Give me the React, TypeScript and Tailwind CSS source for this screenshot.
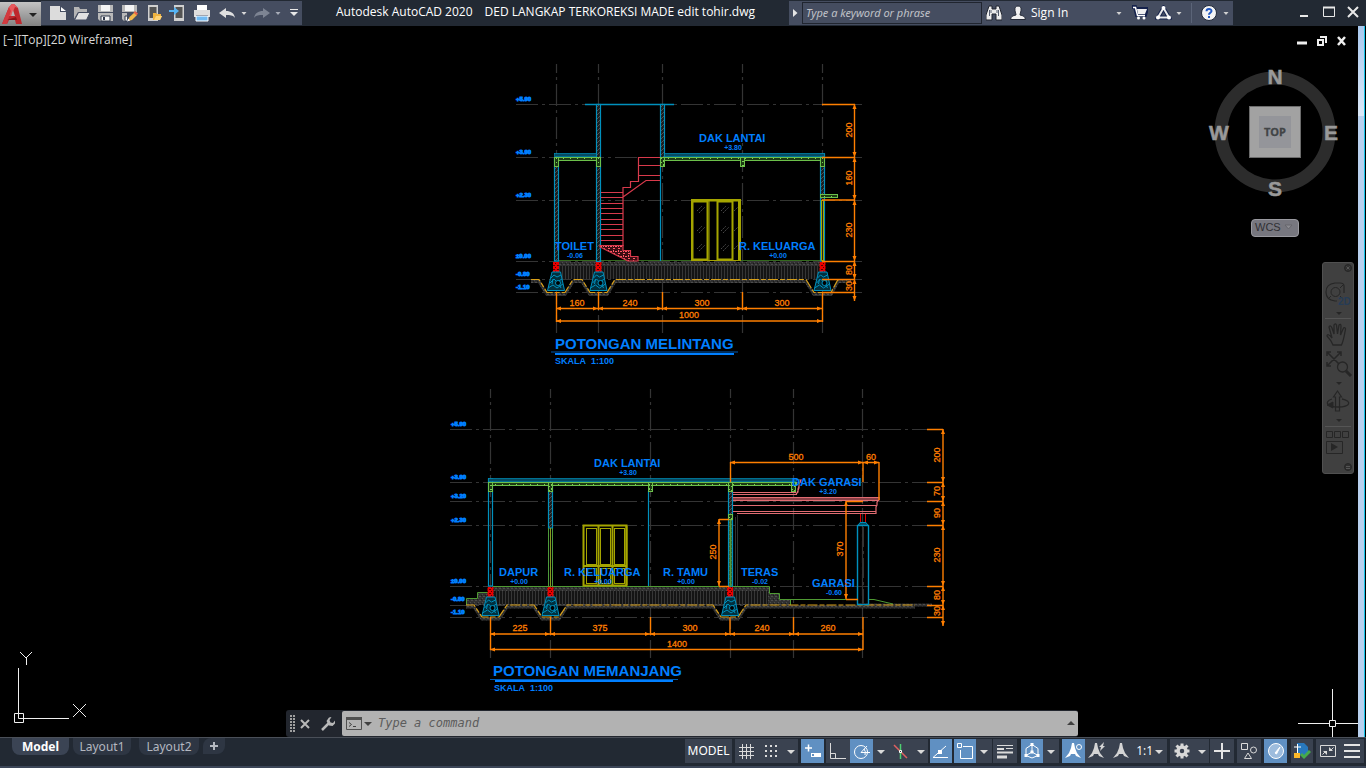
import React from "react";

type Pt = [number, number];

const ORANGE = "#ff7f00";
const BLUE = "#007fff";
const CYAN = "#0090bd";
const GREEN = "#6cc04a";
const YELLOW = "#a5a500";
const PINK = "#e06c72";

/* ---------- drawing helpers ---------- */

const Label = ({ x, y, children }: { x: number; y: number; children: string }) => (
  <text x={x} y={y} fontSize="11" fontWeight="700" fill={BLUE}>{children}</text>
);

const Level = ({ x, y, children }: { x: number; y: number; children: string }) => (
  <text x={x} y={y} fontSize="7" fontWeight="700" fill={BLUE} textAnchor="middle">{children}</text>
);

const Mark = ({ x, y, children }: { x: number; y: number; children: string }) => (
  <text x={x} y={y} fontSize="6" fontWeight="700" fill={BLUE} stroke={BLUE} strokeWidth="0.9" fontFamily="Liberation Sans Narrow, Liberation Sans, sans-serif">{children}</text>
);

const DimText = ({ x, y, v, up }: { x: number; y: number; v: string; up?: boolean }) => (
  <text x={x} y={y} fontSize="9" fill={ORANGE} stroke={ORANGE} strokeWidth="0.3" textAnchor="middle" transform={up ? `rotate(-90 ${x} ${y})` : undefined}>{v}</text>
);

const HDim = ({ y, xs }: { y: number; xs: number[] }) => (
  <g fill={ORANGE}>
    <path d={`M${xs[0]} ${y}H${xs[xs.length - 1]}`} stroke={ORANGE} strokeWidth="1.4" />
    {xs.map((x, i) => (
      <path key={x} d={`${i > 0 ? `M${x} ${y}l-5 -2v4z` : ""}${i < xs.length - 1 ? `M${x} ${y}l5 -2v4z` : ""}`} />
    ))}
  </g>
);

const VDim = ({ x, ys }: { x: number; ys: number[] }) => (
  <g fill={ORANGE}>
    <path d={`M${x} ${ys[0]}V${ys[ys.length - 1]}`} stroke={ORANGE} strokeWidth="1.4" />
    {ys.map((y, i) => (
      <path key={y} d={`${i > 0 ? `M${x} ${y}l-2 -5h4z` : ""}${i < ys.length - 1 ? `M${x} ${y}l-2 5h4z` : ""}`} />
    ))}
  </g>
);

const Axes = ({ xs, y1, y2, ys, x1, x2 }: { xs: number[]; y1: number; y2: number; ys: number[]; x1: number; x2: number }) => (
  <g stroke="#343434" strokeWidth="1.2" strokeDasharray="22 4 3 4">
    {xs.map((x) => <path key={`v${x}`} d={`M${x} ${y1}V${y2}`} strokeDashoffset="13" />)}
    {ys.map((y) => <path key={`h${y}`} d={`M${x1} ${y}H${x2}`} />)}
  </g>
);

const Wall = ({ x, y, h, hatch = true }: { x: number; y: number; h: number; hatch?: boolean }) => (
  <rect x={x} y={y} width="4" height={h} fill={hatch ? "url(#wall)" : "none"} stroke={CYAN} strokeWidth="1.2" />
);

const Footing = ({ x, y }: { x: number; y: number }) => (
  <g>
    <rect x={x - 3} y={y} width="6" height="10" fill="url(#brick)" />
    <path d={`M${x - 4} ${y + 10}h8.500l4 18.500h-17z`} fill="#02303e" stroke={CYAN} />
    <path d={`M${x - 5} ${y + 16}l3 -3l3 2l4 -2M${x - 6} ${y + 21}l4 -4l3 3l5 -3M${x - 8} ${y + 26}l5 -3l4 3l6 -4M${x - 3} ${y + 17}l-1 5M${x + 2} ${y + 20}l3 6`} stroke={CYAN} fill="none" />
    <circle cx={x + 2} cy={y + 21} r="2.500" fill="#000" stroke={CYAN} />
  </g>
);

const poly = (pts: Pt[]) => "M" + pts.map((p) => p.join(" ")).join("L");

const Ground = ({ pts }: { pts: Pt[] }) => (
  <g fill="none">
    <path d={poly(pts)} transform="translate(0 2)" stroke="url(#soil)" strokeWidth="3" />
    <path d={poly(pts)} stroke="#d9a018" strokeWidth="1.2" strokeDasharray="10 2 5 2" />
  </g>
);

const Beams = ({ xs, y }: { xs: number[]; y: number }) => (
  <g fill="url(#conc)" stroke={GREEN}>
    {xs.map((x) => <rect key={x} x={x - 2} y={y} width="4" height="9" />)}
  </g>
);

const CrossSection = () => (
  <g>
    <Axes xs={[556.5, 598.5, 662.5, 742.5, 822.5]} y1={64} y2={333} ys={[104.5, 157.5, 200.5, 261.5, 279.5, 292.5]} x1={516} x2={862} />
    <rect x="558" y="266" width="263" height="13" fill="url(#fill)" />
    <rect x="558" y="262" width="263" height="4" fill="url(#soil)" />
    <path d="M558 260.500H821" stroke="#35691f" />
    <Ground pts={[[531, 279.5], [539, 279.5], [547, 292.5], [565, 292.5], [573, 279.5], [582, 279.5], [590, 292.5], [607, 292.5], [615, 279.5], [806, 279.5], [814, 292.5], [831, 292.5], [838, 279.5], [851, 279.5]]} />
    {[556, 598.5, 822.5].map((x) => <Footing key={x} x={x} y={262} />)}

    <path d="M585 104.500H674" stroke={CYAN} strokeWidth="1.4" />
    <Wall x={554.5} y={158} h={103} />
    <Wall x={596.5} y={104.5} h={157} />
    <Wall x={660.5} y={104.5} h={53} />
    <path d="M660.500 158V261" stroke={CYAN} strokeWidth="1.2" />
    <Wall x={820.5} y={154} h={107} />
    <g fill="#054c63" stroke={CYAN} strokeWidth="0.700">
      <rect x="554.500" y="153.500" width="42" height="3" />
      <rect x="664.500" y="153.500" width="160" height="3" />
    </g>
    <g fill="url(#conc)" stroke={GREEN}>
      <rect x="554.500" y="157.500" width="46" height="3" />
      <rect x="660.500" y="157.500" width="164" height="3" />
      <rect x="820.500" y="194.500" width="17" height="3" />
    </g>
    <Beams xs={[556.5, 598.5, 662.5, 742.5, 822.5]} y={157.5} />
    <rect x="821.500" y="200.500" width="2" height="60" fill="#222" stroke={YELLOW} />

    <g fill="none" stroke="#d83a4c" strokeWidth="1.2">
      <path d="M623 246V187.500H630.500V181.500H638.500V157.500H660M638 165.500H660M638 175.500H660M623 197L646 180.500H660" />
      <path d="M601 192.500H623M601 197.500H623M601 203.500H623M601 208.500H623M601 213.500H623M601 219.500H623M601 224.500H623M601 229.500H623M601 235.500H623M601 240.500H623" />
      <path d="M600 245.500H623V250.500H630.500V256.500H638V261H628L600 247z" fill="url(#stair)" />
    </g>

    <g fill="none" stroke={YELLOW}>
      <rect x="691.500" y="199.500" width="49" height="61" />
      <rect x="692.500" y="201.500" width="15" height="58" strokeWidth="2" />
      <path d="M709 200V260" />
      <rect x="717.500" y="201.500" width="15" height="58" strokeWidth="2" />
      <path d="M739 201V260M692 200.500H740" strokeWidth="2" />
    </g>
    <path d="M697 211l5 -5M699 213l6 -6M697 231l5 -5M699 233l6 -6M697 249l5 -5M699 251l6 -6M721 211l5 -5M723 213l6 -6M721 231l5 -5M723 233l6 -6M721 249l5 -5M723 251l6 -6M734 211l4 -4M734 231l4 -4M734 249l4 -4" stroke="#484848" strokeDasharray="2 1" />

    <g stroke={ORANGE} strokeWidth="1.4">
      <path d="M822 104.500H855M822 157.500H855M822 200H855M822 261.500H855M822 279.500H855M822 292.500H855" />
      <path d="M556.500 292V322M598.500 292V310M662.500 292V310M742.500 292V310M822.500 292V322" />
    </g>
    <VDim x={854.5} ys={[104, 157, 200, 261, 279, 301]} />
    <HDim y={308.5} xs={[556, 598, 662, 742, 822]} />
    <HDim y={321} xs={[556, 822]} />
    <DimText x={852} y={130} v="200" up />
    <DimText x={852} y={178} v="160" up />
    <DimText x={852} y={230} v="230" up />
    <DimText x={852} y={270} v="80" up />
    <DimText x={852} y={286} v="30" up />
    <DimText x={577} y={306} v="160" />
    <DimText x={630} y={306} v="240" />
    <DimText x={702} y={306} v="300" />
    <DimText x={782} y={306} v="300" />
    <DimText x={689} y={318} v="1000" />

    <Mark x={516} y={101}>+5.90</Mark>
    <Mark x={516} y={154}>+3.90</Mark>
    <Mark x={516} y={197}>+2.30</Mark>
    <Mark x={516} y={258}>±0.00</Mark>
    <Mark x={516} y={276}>-0.80</Mark>
    <Mark x={516} y={289}>-1.10</Mark>

    <Label x={699} y={142}>DAK LANTAI</Label>
    <Level x={733} y={150}>+3.80</Level>
    <Label x={555} y={250}>TOILET</Label>
    <Level x={575} y={258}>-0.06</Level>
    <Label x={739} y={250}>R. KELUARGA</Label>
    <Level x={778} y={258}>+0.00</Level>

    <text x="555" y="349" fontSize="15" fontWeight="700" fill={BLUE}>POTONGAN MELINTANG</text>
    <path d="M551 352H738" stroke="#0058b0" />
    <path d="M555 354H734" stroke={BLUE} strokeWidth="2" />
    <text x="555" y="364" fontSize="9" fontWeight="700" fill={BLUE}>SKALA&#160; 1:100</text>
  </g>
);

const LongSection = () => (
  <g>
    <Axes xs={[490.5, 550.5, 650.5, 730.5, 793.5, 862.5]} y1={389} y2={658} ys={[429.5, 482.5, 501.5, 525.5, 586.5, 605.5, 617.5]} x1={450} x2={940} />
    <path d="M467 605V599H478V593H492V587H769V594H779V600H791V605z" fill="url(#soil)" />
    <rect x="494" y="591" width="274" height="13" fill="url(#fill)" />
    <path d="M857 605H932" stroke="url(#soil)" strokeWidth="3" />
    <g fill="none" stroke="#4f9a33">
      <path d="M466.500 605V598.500H477.500V592.500H488.500M493 586.500H769.500V593.500H779.500V599.500H857M790.500 600V605" />
      <path d="M869 599.500H874L893 604" />
    </g>
    <Ground pts={[[466, 605], [474, 605], [482, 617], [499, 617], [507, 605], [534, 605], [542, 617], [559, 617], [567, 605], [713, 605], [721, 617], [738, 617], [746, 605], [915, 605]]} />
    {[490.5, 550.5, 730].map((x) => <Footing key={x} x={x} y={587} />)}

    <Wall x={488.5} y={479} h={107} hatch={false} />
    <Wall x={548.5} y={485} h={43} />
    <path d="M548.500 528V586M552.500 528V586" stroke="#4d9a3a" />
    <path d="M550.500 528V586" stroke="#8a9a20" />
    <path d="M648.500 491V586" stroke={CYAN} strokeWidth="1.2" />
    <Wall x={728.5} y={485} h={101} />
    <path d="M730.500 520V586" stroke="#4d9a3a" strokeWidth="2" />
    <path d="M735.500 517V586M737.500 515V586" stroke="#303030" />
    <rect x="488.500" y="478.500" width="308" height="3" fill="#054c63" stroke={CYAN} strokeWidth="0.700" />
    <rect x="488.500" y="482.500" width="308" height="3" fill="url(#conc)" stroke={GREEN} />
    <Beams xs={[490.5, 550.5, 650.5, 730.5, 793.5]} y={482.5} />
    <rect x="728.500" y="514.500" width="4" height="5" fill="url(#conc)" stroke={GREEN} />

    <g fill="none" stroke={YELLOW}>
      <rect x="583.500" y="525.500" width="43" height="60" strokeWidth="2" />
      {[586.5, 600.5, 614.5].map((x) => (
        <g key={x}>
          <rect x={x} y="528.500" width="10" height="36" />
          <path d={`M${x + 12} 526V585`} strokeWidth="2" />
          <rect x={x} y="568.500" width="10" height="15" />
        </g>
      ))}
      <path d="M583 566H627" strokeWidth="2" />
    </g>

    <g fill="none" stroke={PINK} strokeWidth="1.2">
      <path d="M733 492.500H796M733 494.500H797M796 494l2 -2v-3l1 -3v-3l2 -3h-3M797 493l2 -5v-4l2 -3" />
      <path d="M733 497.500H879V500l-2 2v3l-1 2v6M733 500.500H878M733 505.500H877M733 511.500H876M737 513.500H876V507" />
      <path d="M733 499H878" strokeWidth="2" stroke="#8a3f45" />
    </g>
    <path d="M860.500 514V523M865.500 514V523" stroke="#e00000" />
    <path d="M858 525.500l2 -3H866l2 3z" fill="#054c63" stroke={CYAN} />
    <rect x="857.500" y="525.500" width="11" height="79" fill="none" stroke={CYAN} strokeWidth="1.4" />
    <path d="M863 527V604" stroke="#333" strokeWidth="2" strokeDasharray="20 4 3 4" />

    <g stroke={ORANGE} strokeWidth="1.4">
      <path d="M927 429.500H943M927 482.500H943M927 501.500H943M927 525.500H943M927 586.500H943M927 605.500H943M927 617.500H943" />
      <path d="M490.500 617V650M550.500 617V635M650.500 617V635M730 617V635M793.500 617V635M863 617V650" />
      <path d="M730.500 462V482M863 462V482M879 462V500M719 519.500H729M719 586.500H729M846 501.500H863M846 599.500H858" />
    </g>
    <VDim x={943} ys={[429, 482, 501, 525, 586, 605, 626]} />
    <VDim x={719} ys={[519, 586]} />
    <VDim x={846} ys={[501, 599]} />
    <HDim y={634} xs={[490, 550, 650, 730, 794, 863]} />
    <HDim y={649.5} xs={[490, 863]} />
    <HDim y={462.5} xs={[730, 863, 879]} />
    <DimText x={940} y={455} v="200" up />
    <DimText x={940} y={491} v="70" up />
    <DimText x={940} y={513} v="90" up />
    <DimText x={940} y={555} v="230" up />
    <DimText x={940} y={595} v="80" up />
    <DimText x={940} y={611} v="30" up />
    <DimText x={716} y={552} v="250" up />
    <DimText x={843} y={549} v="370" up />
    <DimText x={796} y={460} v="500" />
    <DimText x={871} y={460} v="60" />
    <DimText x={520} y={631} v="225" />
    <DimText x={600} y={631} v="375" />
    <DimText x={690} y={631} v="300" />
    <DimText x={762} y={631} v="240" />
    <DimText x={828} y={631} v="260" />
    <DimText x={677} y={647} v="1400" />

    <Mark x={451} y={426}>+5.90</Mark>
    <Mark x={451} y={479}>+3.90</Mark>
    <Mark x={451} y={498}>+3.20</Mark>
    <Mark x={451} y={522}>+2.30</Mark>
    <Mark x={451} y={583}>±0.00</Mark>
    <Mark x={451} y={601}>-0.80</Mark>
    <Mark x={451} y={614}>-1.10</Mark>

    <Label x={594} y={467}>DAK LANTAI</Label>
    <Level x={628} y={475}>+3.80</Level>
    <Label x={792} y={486}>DAK GARASI</Label>
    <Level x={828} y={494}>+3.20</Level>
    <Label x={499} y={576}>DAPUR</Label>
    <Level x={519} y={584}>+0.00</Level>
    <Label x={564} y={576}>R. KELUARGA</Label>
    <Level x={603} y={584}>+0.00</Level>
    <Label x={663} y={576}>R. TAMU</Label>
    <Level x={686} y={584}>+0.00</Level>
    <Label x={741} y={576}>TERAS</Label>
    <Level x={760} y={584}>-0.02</Level>
    <Label x={812} y={587}>GARASI</Label>
    <Level x={834} y={595}>-0.60</Level>

    <text x="493" y="676" fontSize="15" fontWeight="700" fill={BLUE}>POTONGAN MEMANJANG</text>
    <path d="M490 679.500H678" stroke="#0058b0" />
    <path d="M495 681H673" stroke={BLUE} strokeWidth="2" />
    <text x="494" y="691" fontSize="9" fontWeight="700" fill={BLUE}>SKALA&#160; 1:100</text>
  </g>
);

const Drawing = () => (
  <svg className="absolute left-[430px] top-[34px] font-['Liberation_Sans',sans-serif]" width="530" height="640" viewBox="430 60 530 640">
    <defs>
      <pattern id="wall" width="4" height="4" patternUnits="userSpaceOnUse">
        <rect width="4" height="4" fill="#1c1c1c" />
        <path d="M0 4L4 0" stroke="#505050" />
      </pattern>
      <pattern id="fill" width="3" height="8" patternUnits="userSpaceOnUse">
        <rect width="3" height="8" fill="#141414" />
        <path d="M1.500 0V8" stroke="#363636" />
      </pattern>
      <pattern id="soil" width="4" height="4" patternUnits="userSpaceOnUse">
        <rect width="4" height="4" fill="#303030" />
        <path d="M0 0h1v1h-1zM2 2h1v1h-1zM3 0h1v1h-1z" fill="#4c4c4c" />
        <path d="M1 3h1v1h-1z" fill="#1a1a1a" />
      </pattern>
      <pattern id="conc" width="7" height="4" patternUnits="userSpaceOnUse">
        <rect width="7" height="4" fill="#1c3a12" />
        <path d="M0 1h2v1h-2zM3 2h1v1h-1zM5 0h1v2h-1z" fill="#7cd058" />
      </pattern>
      <pattern id="brick" width="4" height="4" patternUnits="userSpaceOnUse">
        <rect width="4" height="4" fill="#e80000" />
        <path d="M1 1h1v1h-1zM3 3h1v1h-1zM2 1h1v1h-1z" fill="#500" />
      </pattern>
      <pattern id="stair" width="5" height="5" patternUnits="userSpaceOnUse">
        <rect width="5" height="5" fill="#3a0d12" />
        <path d="M0 1h2v1h-2zM3 3h2v1h-2zM3 0h1v2h-1z" fill="#ff5a68" />
      </pattern>
    </defs>
    <CrossSection />
    <LongSection />
  </svg>
);

/* ---------- small interface parts ---------- */

const Caret = ({ className = "" }: { className?: string }) => (
  <svg width="8" height="5" viewBox="0 0 8 5" className={className}><path d="M0 1h8l-4 4z" fill="currentColor" /></svg>
);

const SmallCaret = ({ className = "" }: { className?: string }) => (
  <svg width="8" height="5" viewBox="0 0 8 5" className={className}><path d="M1.500 1h5l-2.500 3z" fill="currentColor" /></svg>
);

const Ico = ({ w = 18, h = 18, children }: { w?: number; h?: number; children: React.ReactNode }) => (
  <svg width={w} height={h} viewBox={`0 0 ${w} ${h}`} fill="none" className="shrink-0">{children}</svg>
);

const QuickBtn = ({ label, className, children }: { label: string; className: string; children: React.ReactNode }) => (
  <button aria-label={label} className={`flex h-6 shrink-0 items-center justify-center ${className}`}>{children}</button>
);

const Floppy = ({ pen }: { pen?: boolean }) => (
  <Ico w={17}>
    <path d="M1 1h15v16H3l-2-2z" fill="#b9b9b9" />
    <path d="M4 1h9v6H4z" fill="#f4f4f4" /><path d="M1 8h15v1H1z" fill="#454d60" />
    <path d="M4 12h9v5H4z" fill="#f4f4f4" stroke="#30384a" /><path d="M6 13h2v3H6z" fill="#30384a" />
    {pen && <><path d="M6 18V9h11v9z" fill="#454d60" /><path d="M7 17l1.500-4 5-4.500 2.500 2.500-5 5z" fill="#f2b84b" /><path d="M12.500 8.500l1.500-1.500 3 2.500-1.500 2z" fill="#e8654a" /><path d="M6 17.500l1.500-3 1.500 2z" fill="#fff" /></>}
  </Ico>
);

const TopBar = () => (
  <header className="flex h-[26px] shrink-0 items-start justify-between bg-[#222933] text-white">
    <div className="flex">
      <button aria-label="Application menu" className="mt-[2px] flex h-6 w-[41px] shrink-0 items-center gap-[7px] bg-gradient-to-b from-[#c4c4c4] to-[#828282] pl-[2px]">
        <svg width="20" height="22" viewBox="0 0 20 22">
          <path d="M0 21L7 4l3-3h2l4 4 4 16h-6l-1-4-6 0-2 4z" fill="#bf272d" />
          <path d="M7 4l3-3h2l4 4-3-1-4 9h-3z" fill="#e8585c" />
          <path d="M0 21L7 4l2 4-3 9-1 4z" fill="#d33a3f" />
          <path d="M9 13l2-6 2 6z" fill="#b4b4b4" />
          <path d="M5 17l9-3 1 3z" fill="#8c1419" />
        </svg>
        <Caret className="text-[#222]" />
      </button>
      <div className="mt-px flex h-6 shrink-0 items-center bg-[#454d60] text-[#d8d8d8]">
        <QuickBtn label="New" className="w-[33px]"><Ico><path d="M1 2h10v6h6v8H1z" fill="#dcdcdc" /><path d="M12 3l5 4h-5z" fill="#fff" /></Ico></QuickBtn>
        <QuickBtn label="Open" className="w-[15px]"><Ico><path d="M1 15V3h5l1 2h7v3H5z" fill="#b5b5b5" /><path d="M5.500 8.500H17L13.500 16H1.500z" fill="#e2e2e2" stroke="#454d60" /></Ico></QuickBtn>
        <QuickBtn label="Save" className="w-[33px]"><Floppy /></QuickBtn>
        <QuickBtn label="Save As" className="w-[15px]"><Floppy pen /></QuickBtn>
        <QuickBtn label="Open from Web" className="w-[33px]"><Ico><path d="M3 1h10v16H3z" fill="#d0d0d0" /><path d="M4.500 3h7v11h-7z" fill="#545454" /><path d="M8 16V9h3l1 1h4v2h1l-2 4z" fill="#efb33f" /><path d="M9 16l2-4h6l-2 4z" fill="#ffd476" /></Ico></QuickBtn>
        <QuickBtn label="Save to Web" className="w-[15px]"><Ico><path d="M5 1h10v16H5z" fill="#d0d0d0" /><path d="M6.500 3h7v11h-7z" fill="#545454" /><path d="M0 6h5V3l5 4-5 4V8H0z" fill="#55b4f5" /></Ico></QuickBtn>
        <QuickBtn label="Plot" className="w-[34px]"><Ico><path d="M4 1h10v5H4z" fill="#fff" /><path d="M1 6h16v7h-2v-2H3v2H1z" fill="#dedede" /><path d="M3 12h12v5H3z" fill="#72baf2" stroke="#fff" /></Ico></QuickBtn>
        <QuickBtn label="Undo" className="w-[15px]"><Ico><path d="M1 9l7-5v3c5 0 8 2 9 7-2-3-5-3-9-3v3z" fill="#e0e0e0" /></Ico></QuickBtn>
        <QuickBtn label="Undo history" className="w-[19px]"><SmallCaret className="text-[#d8d8d8]" /></QuickBtn>
        <QuickBtn label="Redo" className="w-[17px]"><Ico><path d="M17 9l-7-5v3c-5 0-8 2-9 7 2-3 5-3 9-3v3z" fill="#7d8493" /></Ico></QuickBtn>
        <QuickBtn label="Redo history" className="w-[15px]"><SmallCaret className="text-[#a8adb8]" /></QuickBtn>
        <QuickBtn label="Customize" className="w-[17px]"><Ico w={10} h={10}><path d="M1 1.500h8" stroke="#e8e8e8" /><path d="M1 4h8L5 8z" fill="#e8e8e8" /></Ico></QuickBtn>
      </div>
    </div>
    <h1 className="flex h-6 items-center gap-3 whitespace-pre font-['Open_Sans',sans-serif] text-xs">
      <span>Autodesk AutoCAD 2020</span>
      <span>DED LANGKAP TERKOREKSI MADE edit tohir.dwg</span>
    </h1>
    <div className="flex">
      <div className="mt-px flex h-6 shrink-0 items-center bg-[#454d60] pl-1 text-[#d0d0d0]">
        <button aria-label="Collapse search" className="w-[9px]"><Ico w={5} h={8}><path d="M0 0l4.500 4L0 8z" fill="#e6e6e6" /></Ico></button>
        <input aria-label="Search" placeholder="Type a keyword or phrase" className="h-[22px] w-[180px] border border-[#20252f] bg-[#454d60] px-[3px] pb-px font-['Noto_Sans',sans-serif] text-[11px] italic text-white outline-none placeholder:text-[#c0c2c8]" />
        <QuickBtn label="Search" className="w-6"><Ico w={16} h={16}><path d="M3 1h3v3h4V1h3l3 9v5h-6V9H6v6H0v-5z" fill="#ececec" stroke="#20252f" /><path d="M3.500 5v6M5 5v3M11 5v3M12.500 5v6" stroke="#555c6c" /></Ico></QuickBtn>
        <button className="flex h-6 items-center gap-[5px] pl-1 font-['Open_Sans',sans-serif] text-xs text-white">
          <Ico w={16} h={16}><path d="M8 1c2.500 0 3.500 2 3 4.500C10.700 8 10 8.500 10 10c3 .5 5 1.500 5.500 4.500H.5C1 11.500 3 10.500 6 10c0-1.500-.7-2-1-4.500C4.500 3 5.500 1 8 1z" fill="#f0f0f0" stroke="#252b38" /></Ico>
          <span className="w-[79px] text-left">Sign In</span>
          <SmallCaret className="text-[#d0d0d0]" />
        </button>
        <QuickBtn label="App Store" className="ml-2 w-[18px]"><Ico w={16} h={16}><path d="M0 2h3l2 8h8l2-6H4" stroke="#15224c" strokeWidth="4" /><path d="M1 2.500h2.500l2 8H13" stroke="#fff" strokeWidth="1.500" /><path d="M5 4h10l-2 5H6z" fill="#f0f0f0" /><circle cx="6.500" cy="13" r="1.500" fill="#fff" /><circle cx="12" cy="13" r="1.500" fill="#fff" /></Ico></QuickBtn>
        <QuickBtn label="Autodesk services" className="ml-[6px] w-[17px]"><Ico w={17} h={16}><path d="M8.500 3L3 12.500h11z" stroke="#15224c" strokeWidth="4" /><path d="M8.500 3L3 12.500h11z" stroke="#e8e8e8" strokeWidth="2" /><circle cx="8.500" cy="3" r="2" fill="#fff" /><circle cx="3" cy="12.500" r="2" fill="#fff" /><circle cx="14" cy="12.500" r="2" fill="#fff" /></Ico></QuickBtn>
        <SmallCaret className="ml-[3px]" />
        <span className="ml-2 h-5 w-px bg-[#5b6478]" />
        <QuickBtn label="Help" className="ml-[9px] w-4">
          <Ico w={16} h={16}><circle cx="8" cy="8" r="7.500" fill="#f4f4f4" stroke="#222a3a" /><path d="M5.500 6.300C5.500 3.300 10.500 3.300 10.500 6c0 1.700-2.500 1.900-2.500 3.700" stroke="#2358c0" strokeWidth="2" /><path d="M7 11h2v2H7z" fill="#2358c0" /></Ico>
        </QuickBtn>
        <SmallCaret className="ml-[5px] mr-[3px]" />
      </div>
      <div className="flex h-6 items-center pl-[66px] pr-[7px] text-[#e8e8e8]">
        <button aria-label="Minimize" className="w-6"><Ico w={10} h={12}><path d="M1 10h8" stroke="currentColor" strokeWidth="2" /></Ico></button>
        <button aria-label="Maximize" className="w-6"><Ico w={12} h={12}><path d="M.5 1.500h11v9H.5z" stroke="currentColor" /><path d="M0 1.500h12" stroke="currentColor" strokeWidth="2" /></Ico></button>
        <button aria-label="Close"><Ico w={12} h={12}><path d="M1 1l10 10M11 1L1 11" stroke="currentColor" strokeWidth="2" /></Ico></button>
      </div>
    </div>
  </header>
);

const ViewCube = () => (
  <div className="absolute right-[18px] top-[38px] h-[140px] w-[132px]">
    <svg width="132" height="140" viewBox="0 0 132 140" className="font-['Liberation_Sans',sans-serif]">
      <circle cx="67" cy="68" r="54" fill="none" stroke="#2c2c2c" strokeWidth="13" />
      <g fontSize="21" fontWeight="700" fill="#999" stroke="#999" strokeWidth="0.500" textAnchor="middle">
        <text x="67" y="20">N</text><text x="67" y="132">S</text><text x="11" y="76">W</text><text x="123" y="76">E</text>
      </g>
      <rect x="41.500" y="42.500" width="51" height="51" fill="#a2a2a2" stroke="#6c6c6c" />
      <rect x="51" y="52" width="32" height="32" fill="#94959a" />
      <text x="67" y="72" fontSize="11" fontWeight="700" fill="#414446" stroke="#414446" strokeWidth="0.300" textAnchor="middle" fontFamily="Liberation Sans Narrow, Open Sans, sans-serif">TOP</text>
    </svg>
  </div>
);

const NavBar = () => (
  <aside aria-label="Navigation bar" className="absolute right-1 top-[236px] flex h-[212px] w-8 flex-col items-center rounded-[3px] border border-[#505050] bg-[#404040]">
    <svg width="30" height="210" viewBox="0 0 30 210" fill="none" stroke="#262626">
      <circle cx="25" cy="5" r="3.500" fill="#303030" /><path d="M23.500 3.500l3 3M26.500 3.500l-3 3" stroke="#555" />
      <path d="M21 30V23q0-3-4-3h-5q-9 1-9 9t9 9h2" strokeWidth="1.200" />
      <circle cx="12.500" cy="29" r="4.500" /><path d="M8 33l-3 3M17 25l3-3M17 33l2 2" />
      <text x="15" y="42" fontSize="10" fontWeight="700" fill="#263c56" stroke="none" fontFamily="Liberation Sans, sans-serif">2D</text>
      <path d="M13 49h6l-3 3z" fill="#262626" stroke="none" />
      <path d="M2 55.500h26" stroke="#555" />
      <path d="M10 82c-2-5-4-7-6-9 0-2 2-2 5 2L6 64c1-2 2-1 3 1l2 6V62c1-2 2-1 2.500 0l1 9 1.500-9c1-1 2-1 2 1l-.5 9 3-7c1-1 2 0 2 1-1 6-2 12-4 16z" strokeWidth="1.300" />
      <path d="M4 89l14 14M18 89L4 103M4 93v-4h4M14 89h4v4M4 99v4h4" strokeWidth="1.500" />
      <circle cx="19.500" cy="104" r="5" fill="#404040" strokeWidth="1.300" /><path d="M23 108l5 5" strokeWidth="3" />
      <path d="M13 119h6l-3 3z" fill="#262626" stroke="none" />
      <path d="M12.500 148v-14h-2l4-6 4 6h-2v14z" strokeWidth="1.200" />
      <path d="M9 136c-9 3-4 8 6 8 13 0 14-6 4-8" strokeWidth="1.300" /><path d="M4 142l6-3v6z" fill="#262626" />
      <path d="M13 156h6l-3 3z" fill="#262626" stroke="none" />
      <path d="M2 163.500h26" stroke="#555" />
      <path d="M3.500 168.500h6v6h-6zM11.500 168.500h6v6h-6zM19.500 168.500h6v6h-6zM3.500 178.500h16v12h-16z" />
      <path d="M8 180l7 4-7 4z" fill="#262626" stroke="none" />
      <circle cx="25" cy="204" r="3.500" fill="#303030" /><path d="M23 203.500h4M23 205.500h4" stroke="#555" />
    </svg>
  </aside>
);

const CommandLine = () => (
  <div className="absolute bottom-0 left-[286px] right-[280px] flex h-[27px] rounded-[3px] bg-[#22262e] py-px text-[#b4b4b4]">
    <div className="flex w-14 shrink-0 items-center pl-1">
      <svg width="5" height="17" viewBox="0 0 5 17"><path d="M1 0V17M4 0V17" stroke="#a0a0a0" strokeWidth="2" strokeDasharray="2 1" /></svg>
      <button aria-label="Close command line" className="ml-[3px] p-px"><Ico w={12} h={12}><path d="M2 2l8 8M10 2l-8 8" stroke="#b8b8b8" strokeWidth="2" /></Ico></button>
      <button aria-label="Customize command line" className="ml-2"><Ico w={16} h={16}><path d="M2 14l6.500-6.500" stroke="#b8b8b8" strokeWidth="2.500" /><path d="M8 8L6.500 5 9 1.500 11.500 1 9.500 4l1 2.500 2.500.5 2-2.500v3L12.500 10 9 9.500z" fill="#b8b8b8" /></Ico></button>
    </div>
    <div className="flex min-w-0 flex-1 items-center rounded-[2px] bg-[#b2b2b2] pl-1">
      <Ico w={16} h={13}><path d="M.5.500h15v12H.5z" stroke="#505050" /><path d="M0 0h16v3H0z" fill="#505050" /><path d="M3 5.500l2.500 2L3 9.500M7 9.500h3" stroke="#404040" /></Ico>
      <Caret className="ml-[2px] text-[#404040]" />
      <input aria-label="Command" placeholder="Type a command" className="ml-[6px] min-w-0 flex-1 bg-transparent pb-px font-['DejaVu_Sans_Mono',monospace] text-xs italic text-[#333] outline-none placeholder:text-[#5c5c5c]" />
      <button aria-label="Show history" className="mr-[3px]"><Caret className="rotate-180 text-[#404040]" /></button>
    </div>
  </div>
);

const Canvas = () => (
  <main className="flex min-h-[711px] flex-1 bg-black">
    <section className="relative min-w-0 flex-1 overflow-hidden">
      <Drawing />
      <div className="absolute left-[3px] top-1 font-['Open_Sans',sans-serif] text-xs leading-5 text-[#d8d8d8]">
        <button>[−]</button><button>[Top]</button><button>[2D Wireframe]</button>
      </div>
      <div className="absolute right-3 top-[10px] flex items-center gap-[10px] text-[#eee]">
        <button aria-label="Minimize drawing"><Ico w={10} h={10}><path d="M0 7h10" stroke="currentColor" strokeWidth="3" /></Ico></button>
        <button aria-label="Restore drawing"><Ico w={10} h={10}><path d="M1 4h5v5H1z" stroke="currentColor" strokeWidth="2" /><path d="M3 1h6v6" stroke="currentColor" strokeWidth="2" /></Ico></button>
        <button aria-label="Close drawing"><Ico w={9} h={10}><path d="M1 1l7 8M8 1L1 9" stroke="currentColor" strokeWidth="2.500" /></Ico></button>
      </div>
      <ViewCube />
      <button className="absolute right-[59px] top-[193px] flex h-[18px] w-12 items-center justify-between rounded-[4px] border border-[#9a9aa0] bg-[#77777f] pl-[3px] pr-[5px] pb-[2px] font-['Liberation_Sans',sans-serif] text-[11px] text-[#303034]">
        WCS
        <Ico w={9} h={6}><path d="M1 1h7L4.500 5z" fill="#8c8c92" stroke="#66666c" /></Ico>
      </button>
      <NavBar />
      <svg className="absolute bottom-3 left-3" width="80" height="76" viewBox="0 0 80 76" fill="none" stroke="#f0f0f0">
        <path d="M6.500 19V69.500H57M2.500 64.500h9v9h-9z" />
        <path d="M8 3l6 6 6-6M14.500 9v7M61 55l13 13M74 55L61 68" />
      </svg>
      <svg className="absolute bottom-0 right-0" width="60" height="48" viewBox="0 0 60 48" fill="none" stroke="#f0f0f0">
        <path d="M0 34.500H31M38 34.500H60M34.500 0V31M34.500 38V48M31.500 31.500h6v6h-6z" />
      </svg>
      <CommandLine />
    </section>
    <div className="flex w-2 shrink-0 flex-col border-r border-black bg-[#b9d1ef]">
      <div className="h-[90px] border-r border-[#16c4e8] bg-gradient-to-b from-[#a9c8ee] to-[#dce9f8]" />
      <div className="flex-1 border-r border-[#16c4e8]" />
    </div>
  </main>
);

const Cell = ({ label, className, on, children }: { label: string; className: string; on?: boolean; children: React.ReactNode }) => (
  <button aria-label={label} className={`flex h-6 shrink-0 items-center justify-center ${on ? "bg-[#6090c2]" : "bg-[#3a4250]"} ${className}`}>{children}</button>
);

const Drop = ({ label, className = "w-4" }: { label: string; className?: string }) => (
  <Cell label={label} className={className}><Caret className="text-[#dadada]" /></Cell>
);

const Person = ({ extra }: { extra?: "ring" | "bolt" }) => (
  <>
    <path d="M7 1h2l1 5 2 5 4 5-5-2-1-2H6l-1 2-5 2 4-5 2-5z" fill={extra === "ring" ? "#fff" : "#d4d4d4"} />
    {extra === "ring" && <circle cx="14" cy="5" r="2.500" stroke="#fff" />}
    {extra === "bolt" && <path d="M16 0l-5 5h2l-1 4 5-5h-2z" fill="#d4d4d4" />}
  </>
);

const StatusBar = () => (
  <footer className="flex h-[31px] shrink-0 items-start justify-between border-b-2 border-t border-b-[#3b4557] border-t-[#4a4f58] bg-[#222933] text-white">
    <nav className="flex gap-1 pl-3 font-['Noto_Sans',sans-serif] text-xs text-[#b4b8c0]">
      <a href="#model" className="flex h-[17px] w-[57px] items-center justify-center rounded-b-lg bg-[#3b4454] font-bold text-white">Model</a>
      <a href="#layout1" className="flex h-[17px] w-[58px] items-center justify-center rounded-b-lg bg-[#2e3643]">Layout1</a>
      <a href="#layout2" className="ml-1 flex h-[17px] w-[60px] items-center justify-center rounded-b-lg bg-[#2e3643]">Layout2</a>
      <button aria-label="New layout" className="flex h-4 w-[22px] items-center justify-center rounded-br-lg rounded-tl-lg bg-[#2e3643]"><Ico w={10} h={10}><path d="M5 1v8M1 5h8" stroke="#b4b8c0" strokeWidth="2" /></Ico></button>
    </nav>
    <div className="flex shrink-0 pr-[2px] pt-px">
      <button className="mr-[3px] h-6 w-[47px] bg-[#3a4250] font-['Noto_Sans',sans-serif] text-xs">MODEL</button>
      <Cell label="Grid" className="w-6"><Ico><path d="M4.500 2v15M8.500 2v15M12.500 2v15M1 5.500h15M1 9.500h15M1 13.500h15" stroke="#dadada" /></Ico></Cell>
      <Cell label="Snap" className="w-6"><Ico><path d="M3 4h12M3 9h12M3 14h12" stroke="#dadada" strokeWidth="2" strokeDasharray="2 3" /></Ico></Cell>
      <Drop label="Snap settings" className="mr-[3px] w-[15px]" />
      <Cell label="Dynamic input" on className="mr-[2px] w-[23px]"><Ico><path d="M1 6h7M4.500 2.500v7" stroke="#fff" strokeWidth="1.500" /><path d="M7 11h10v4H7z" fill="#fff" /><path d="M8 12h2v2H8z" fill="#6090c2" /></Ico></Cell>
      <Cell label="Ortho" className="w-6"><Ico><path d="M1.500 1v15.500H17M1.500 11.500h5v5" stroke="#dadada" /></Ico></Cell>
      <Cell label="Polar tracking" on className="w-[23px]"><Ico><circle cx="8" cy="10" r="6.500" stroke="#fff" /><path d="M8 10.500h9M8 10.500L14 4M11 7q2 2 1 6" stroke="#fff" /></Ico></Cell>
      <Drop label="Polar settings" />
      <Cell label="Isometric drafting" className="w-6"><Ico><path d="M2 3l13 13" stroke="#e06060" strokeWidth="1.500" /><path d="M8.500 2v15" stroke="#4ed070" strokeWidth="1.500" /><path d="M7.500 8.500h2v2h-2z" fill="#333" stroke="#fff" /></Ico></Cell>
      <Drop label="Isometric settings" className="mr-[2px] w-[15px]" />
      <Cell label="Object snap tracking" on className="mr-[2px] w-[22px]"><Ico><path d="M16 15.500H1L14 4" stroke="#fff" /><path d="M6 8h4v4H6z" fill="#fff" /></Ico></Cell>
      <Cell label="Object snap" on className="w-[22px]"><Ico><path d="M7 4.500h9.500v12h-12V8" stroke="#fff" /><path d="M1.500 1.500h4v4h-4z" stroke="#fff" /></Ico></Cell>
      <Drop label="Snap modes" className="mr-px w-4" />
      <Cell label="Lineweight" className="mr-[4px] w-6"><Ico><path d="M1 3.500h16" stroke="#dadada" /><path d="M1 7h7" stroke="#dadada" strokeWidth="2" /><path d="M10 6.500h7" stroke="#dadada" /><path d="M1 10.500h16" stroke="#dadada" strokeWidth="2" /><path d="M1 15h10" stroke="#dadada" strokeWidth="3" /></Ico></Cell>
      <Cell label="3D object snap" on className="w-[22px]"><Ico><path d="M9 2.500l6 4v7l-6 2.500-6-2.500v-7zM9 3v7L3 13.500M9 10l6 3.500" stroke="#fff" /><path d="M7.500 1h3v3h-3zM1.500 12h3v3h-3zM13.500 12h3v3h-3zM7.500 8.500h3v3h-3z" fill="#fff" /></Ico></Cell>
      <Drop label="3D snap settings" className="mr-[3px] w-4" />
      <Cell label="Annotation visibility" on className="w-[23px]"><Ico><Person extra="ring" /></Ico></Cell>
      <Cell label="Auto scale" className="w-6"><Ico><Person extra="bolt" /></Ico></Cell>
      <Cell label="Annotation" className="w-6"><Ico w={16}><Person /></Ico></Cell>
      <button className="mr-[3px] flex h-6 w-[34px] items-center justify-end gap-[2px] bg-[#3a4250] pr-1 font-['Open_Sans',sans-serif] text-xs">1:1<Caret className="text-[#dadada]" /></button>
      <Cell label="Workspace" className="w-6"><Ico><circle cx="9" cy="9" r="4" stroke="#d8d8d8" strokeWidth="3.500" /><path d="M9 1.500v3M9 13.500v3M1.500 9h3M13.500 9h3M3.500 3.500l2 2M12.500 12.500l2 2M14.500 3.500l-2 2M5.500 12.500l-2 2" stroke="#d8d8d8" strokeWidth="3" /></Ico></Cell>
      <Drop label="Workspace settings" className="mr-px w-[15px]" />
      <Cell label="Annotation monitor" className="mr-[3px] w-6"><Ico><path d="M9 1v16M1 9h16" stroke="#e4e4e4" strokeWidth="2" /></Ico></Cell>
      <Cell label="Isolate objects" className="mr-[3px] w-6"><Ico><path d="M1.500 1.500h6v6h-6zM8 11l3.500 5.500h-7z" stroke="#dadada" /><circle cx="13.500" cy="8" r="3" stroke="#dadada" /></Ico></Cell>
      <Cell label="Graphics performance" on className="mr-[4px] w-[23px]"><Ico><circle cx="9" cy="9" r="7.500" fill="#9dbcdd" stroke="#fff" /><path d="M8 11l5-6-3.500 7z" fill="#fff" stroke="#fff" /></Ico></Cell>
      <Cell label="Drawing health" className="mr-[3px] w-[22px]"><Ico><path d="M4 1h7l4 4v8H4z" fill="#2878bd" /><path d="M1 5h7M4.500 2v13" stroke="#fff" /><path d="M1 11h6v5H1z" fill="#fbb829" /><path d="M8 12l3 3 6-6" stroke="#45ab4b" strokeWidth="3" /></Ico></Cell>
      <Cell label="Clean screen" className="w-6"><Ico><path d="M1.500 3.500h15v11h-15z" stroke="#dadada" /><path d="M3.500 12.500l3-3M14.500 5.500l-3 3" stroke="#dadada" /><path d="M4 9h4v4zM10 5v4h4z" fill="#dadada" /></Ico></Cell>
      <Cell label="Customization" className="w-6"><Ico><path d="M1 3h16M1 9h16M1 15h16" stroke="#e4e4e4" strokeWidth="2" /></Ico></Cell>
    </div>
  </footer>
);

export default function App() {
  return (
    <div className="flex min-h-screen flex-col overflow-hidden bg-black">
      <TopBar />
      <Canvas />
      <StatusBar />
    </div>
  );
}
